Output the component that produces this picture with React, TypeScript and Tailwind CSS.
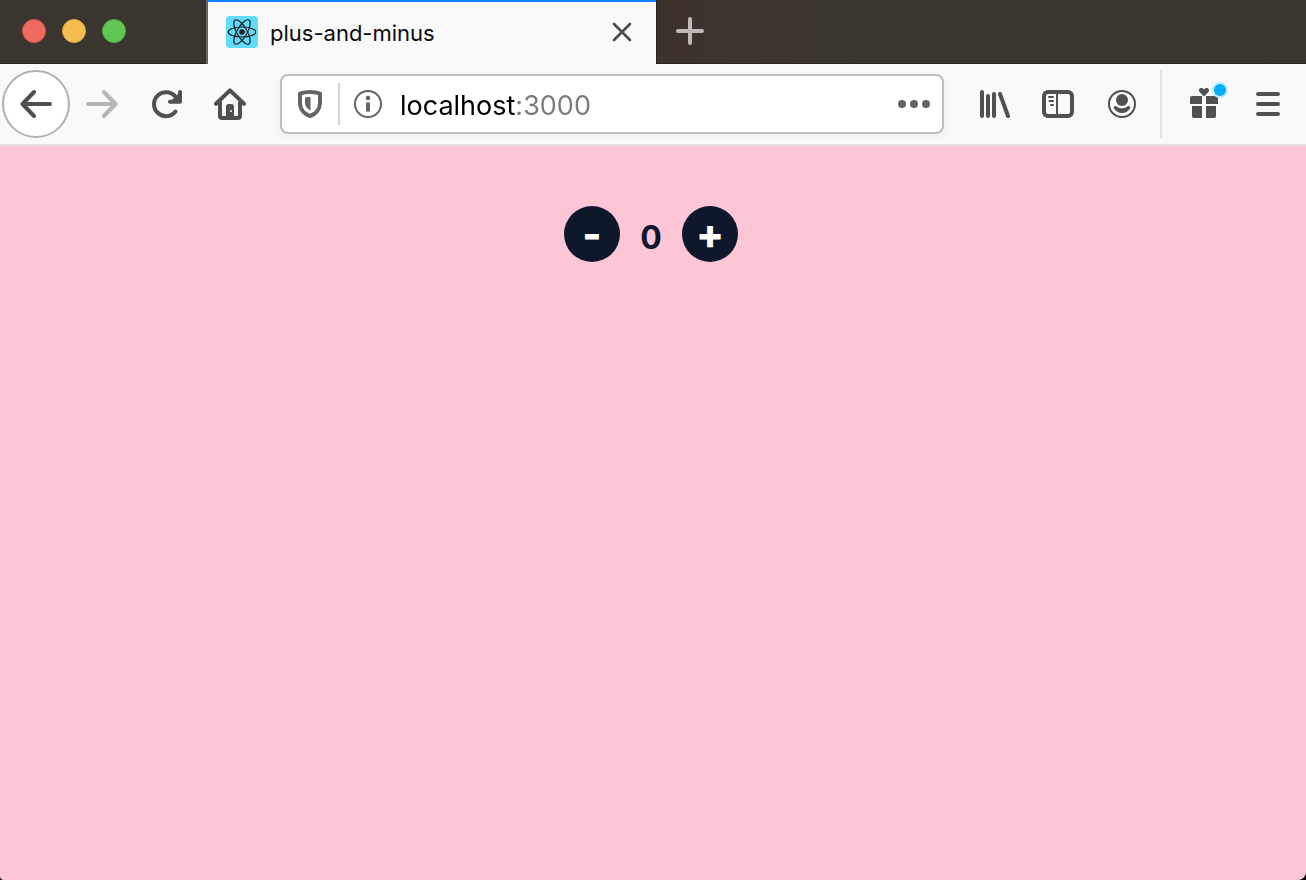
import { useState, type ReactNode } from "react";

function Icon({ children, size = "size-8" }: { children: ReactNode; size?: string }) {
  return (
    <svg
      viewBox="0 0 32 32"
      className={`${size} shrink-0`}
      fill="none"
      stroke="currentColor"
      strokeWidth={4}
      strokeLinecap="round"
      strokeLinejoin="round"
      aria-hidden="true"
    >
      {children}
    </svg>
  );
}

function ToolButton({ label, children, tone = "text-[#505052]" }: { label: string; children: ReactNode; tone?: string }) {
  return (
    <button type="button" aria-label={label} className={`flex h-16 w-16 shrink-0 items-center justify-center ${tone}`}>
      {children}
    </button>
  );
}

function TabStrip() {
  return (
    <div className="flex h-16 bg-[#3b352f]">
      <div className="flex w-[206px] shrink-0 items-center gap-4 border-b border-[#28231f] pb-0.5 pl-[22px]">
        <button type="button" aria-label="Close window" className="size-6 rounded-full border border-[#d9544a] bg-[#ee6a5f]" />
        <button type="button" aria-label="Minimize window" className="size-6 rounded-full border border-[#dba63f] bg-[#f6be50]" />
        <button type="button" aria-label="Zoom window" className="size-6 rounded-full border border-[#52ae42] bg-[#62c655]" />
      </div>
      <div className="flex w-[450px] items-center border-t-2 border-l-2 border-t-[#0a84ff] border-l-[#67625f] bg-[#f9f9fa] pr-[22px] pb-0.5 pl-[18px]">
        <svg viewBox="0 0 32 32" className="size-8 shrink-0 rounded bg-[#61dafb]" fill="none" stroke="#1b1b1b" strokeWidth={1.2} aria-hidden="true">
          <ellipse cx="16" cy="16" rx="13.8" ry="5" />
          <ellipse cx="16" cy="16" rx="13.8" ry="5" transform="rotate(60 16 16)" />
          <ellipse cx="16" cy="16" rx="13.8" ry="5" transform="rotate(120 16 16)" />
          <circle cx="16" cy="16" r="2.8" fill="#1b1b1b" stroke="none" />
        </svg>
        <span className="ml-3 flex-1 pt-0.5 text-[22px] leading-8 text-[#0c0c0d]">plus-and-minus</span>
        <button type="button" aria-label="Close tab" className="text-[#4a4a4b]">
          <svg viewBox="0 0 24 24" className="size-6" fill="none" stroke="currentColor" strokeWidth={2.6} strokeLinecap="round" aria-hidden="true">
            <path d="M4 4l16 16M20 4L4 20" />
          </svg>
        </button>
      </div>
      <div className="flex flex-1 items-center border-b border-l border-[#28231f] bg-linear-to-r from-[#3d322b] to-[#39352e] to-30% pb-0.5 pl-[17px] text-[#bdbab8]">
        <button type="button" aria-label="New tab">
          <Icon>
            <path d="M4 16h24M16 4v24" />
          </Icon>
        </button>
      </div>
    </div>
  );
}

function AddressBar() {
  return (
    <div className="mx-[18px] flex h-[60px] min-w-0 flex-1 items-center rounded-lg border-2 border-[#bebebe] bg-white px-3 text-[#646465] shadow-[0_2px_8px_rgba(0,0,0,0.06)]">
      <button type="button" aria-label="Tracking protection" className="shrink-0">
        <Icon>
          <path d="M16 4c4 0 7 .5 10 1.6v9.2C26 21 22 26 16 28 10 26 6 21 6 14.8V5.600C9 4.500 12 4 16 4z" />
          <path d="M16.500 8.700v14c-3.500-2-5.500-4.600-5.500-8.200V9.500z" fill="currentColor" stroke="none" />
        </Icon>
      </button>
      <div className="mx-3 h-[42px] w-0.5 shrink-0 bg-[#d2d2d2]" />
      <button type="button" aria-label="Site information" className="shrink-0">
        <Icon>
          <circle cx="16" cy="16" r="13" strokeWidth={2} />
          <circle cx="16" cy="10" r="2.200" fill="currentColor" stroke="none" />
          <path d="M16 16v6" />
        </Icon>
      </button>
      <input
        aria-label="Address"
        defaultValue="localhost:3000"
        className="ml-4 min-w-0 flex-1 bg-linear-to-r from-black from-[116px] to-[#7b7b7c] to-[116px] bg-clip-text pt-1 text-[27px] leading-9 text-transparent caret-black outline-none"
      />
      <button type="button" aria-label="Page actions" className="shrink-0">
        <Icon>
          <g fill="currentColor" stroke="none">
            <circle cx="4" cy="16" r="4" />
            <circle cx="16" cy="16" r="4" />
            <circle cx="28" cy="16" r="4" />
          </g>
        </Icon>
      </button>
    </div>
  );
}

function Toolbar() {
  return (
    <div className="flex h-[82px] items-center border-b-2 border-[#e0e0e0] bg-[#f9f9fa] pr-1.5 pl-0.5">
      <button type="button" aria-label="Back" className="flex size-[68px] shrink-0 items-center justify-center rounded-full border-2 border-[#b1b1b1] bg-white text-[#505052]">
        <Icon>
          <path d="M30 16H3M14 4L2.500 16 14 28" />
        </Icon>
      </button>
      <ToolButton label="Forward" tone="text-[#b6b6b7]">
        <Icon>
          <path d="M2 16h27M18 4l11.500 12L18 28" />
        </Icon>
      </ToolButton>
      <ToolButton label="Reload">
        <Icon>
          <path d="M25.500 23.500A12 12 0 1 1 26 9.500" />
          <path d="M30 4v9.800H20z" fill="currentColor" stroke="none" />
          <path d="M30 4v9.800H20" />
        </Icon>
      </ToolButton>
      <ToolButton label="Home">
        <Icon>
          <path d="M2 15.800L16 2.400l14 13.400" />
          <path d="M6 13.500V28a2 2 0 0 0 2 2h16a2 2 0 0 0 2-2V13.500" strokeLinecap="butt" />
          <path d="M12 29V18.500a2.500 2.500 0 0 1 2.500-2.500h3a2.500 2.500 0 0 1 2.500 2.500V29z" fill="currentColor" stroke="none" />
          <circle cx="17" cy="23" r="1" fill="#f9f9fa" stroke="none" />
        </Icon>
      </ToolButton>
      <AddressBar />
      <ToolButton label="Library">
        <Icon>
          <path d="M4 4v24M10 8v20M16 6v22M22 6l8 22" />
        </Icon>
      </ToolButton>
      <ToolButton label="Sidebars">
        <Icon>
          <rect x="2" y="4" width="28" height="24" rx="4" />
          <path d="M15 5v22M7 9h4M7.500 13H11M9 17h2" strokeWidth={2} />
        </Icon>
      </ToolButton>
      <ToolButton label="Account">
        <Icon>
          <circle cx="16" cy="16" r="13" strokeWidth={2} />
          <circle cx="16" cy="12" r="6" fill="currentColor" stroke="none" />
          <path d="M9.300 18c-1.500 0-2.100 1.600-1.100 2.700C10 23.500 12.800 25 16 25s6-1.500 7.800-4.300c1-1.100.4-2.700-1.100-2.700-.8 0-1.200.3-1.700.7-3 2-7 2-10 0-.5-.4-.9-.7-1.700-.7z" fill="currentColor" stroke="none" />
        </Icon>
      </ToolButton>
      <div className="mr-2.5 ml-1.5 h-[68px] w-0.5 shrink-0 bg-[#e0e0e1]" />
      <ToolButton label="What's new">
        <span className="relative">
          <Icon>
            <g fill="currentColor" stroke="none">
              <path d="M4 8h10v8H2v-6a2 2 0 0 1 2-2zM18 8h10a2 2 0 0 1 2 2v6H18zM4 18h10v12H6a2 2 0 0 1-2-2zM18 18h10v10a2 2 0 0 1-2 2h-8z" />
              <path d="M16 8.500l-4.200-4.200C10 2.500 11.200 0 13.300 0c1.300 0 2.200.7 2.700 1.700C16.500.7 17.400 0 18.700 0c2.100 0 3.300 2.500 1.500 4.300z" />
            </g>
          </Icon>
          <span className="absolute -top-1.5 -right-2 size-4 rounded-full border-2 border-[#bdeafd] bg-[#00adfb]" />
        </span>
      </ToolButton>
      <ToolButton label="Menu">
        <Icon>
          <path d="M6 6h20M6 16h20M6 26h20" />
        </Icon>
      </ToolButton>
    </div>
  );
}

export default function App() {
  const [count, setCount] = useState(0);
  const round = "flex size-14 items-center justify-center rounded-full bg-[#0f172a] text-[41px] font-extrabold text-white";
  return (
    <div className="bg-black">
      <div className="flex min-h-screen flex-col overflow-hidden rounded-br-lg rounded-bl-sm bg-[#fdc6d6] font-['Inter',sans-serif]">
        <header>
          <TabStrip />
          <Toolbar />
        </header>
        <main className="flex flex-1 items-start justify-center pt-[60px] pr-1 leading-10 text-[#0f172a]">
          <button type="button" aria-label="Decrease" className={round} onClick={() => setCount(count - 1)}>
            -
          </button>
          <output className="min-w-[62px] pt-3 text-center text-[32px] leading-10 font-bold">{count}</output>
          <button type="button" aria-label="Increase" className={round} onClick={() => setCount(count + 1)}>
            +
          </button>
        </main>
      </div>
    </div>
  );
}
